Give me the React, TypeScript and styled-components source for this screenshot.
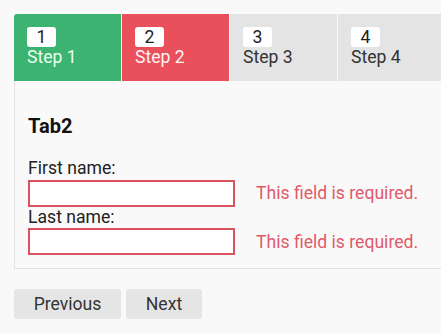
import { ReactElement } from 'react'
import styled, { createGlobalStyle } from 'styled-components'

const GlobalStyle = createGlobalStyle`
  html, body {
    margin: 0;
    padding: 0;
    background: #f9f9f9;
    overflow: hidden;
  }
  body {
    font-family: Roboto, 'Liberation Sans', sans-serif;
    font-size: 17.6px;
    color: #222;
  }
`

const Wizard = styled.div`
  width: 441px;
  box-sizing: border-box;
  padding: 14px 0 14px 14px;
  overflow: hidden;
`

const TabBar = styled.div`
  display: flex;
  gap: 1px;
`

const Tab = styled.div<{ $bg: string; $color: string }>`
  width: 107px;
  height: 67px;
  flex: none;
  box-sizing: border-box;
  padding: 13px 13px 0;
  background: ${(p) => p.$bg};
  color: ${(p) => p.$color};
  line-height: 21px;
  &:first-child {
    border-top-left-radius: 3px;
  }
`

const Badge = styled.span`
  display: block;
  width: 29px;
  height: 20px;
  background: #fff;
  border-radius: 3px;
  color: #222;
  text-align: center;
  line-height: 21px;
`

const Panel = styled.div`
  border-left: 1px solid #e3e3e3;
  border-bottom: 1px solid #e3e3e3;
  padding: 33px 13px 13px;
  height: 188px;
  box-sizing: border-box;
`

const Title = styled.h3`
  margin: 0 0 20px;
  font-size: 20px;
  line-height: 24px;
  font-weight: 700;
  color: #111;
`

const Label = styled.div`
  line-height: 21.5px;
`

const Row = styled.div`
  display: flex;
  align-items: center;
  gap: 21px;
`

const Input = styled.input`
  width: 207px;
  height: 27px;
  box-sizing: border-box;
  border: 2px solid #d9525e;
  background: #fff;
  margin: 0;
  outline: none;
`

const Error = styled.span`
  color: #e0596a;
`

const Buttons = styled.div`
  display: flex;
  gap: 5px;
  margin-top: 20px;
`

const Button = styled.button<{ $w: number }>`
  width: ${(p) => p.$w}px;
  height: 30px;
  border: none;
  border-radius: 3px;
  background: #e5e5e5;
  color: #333;
  font-family: Roboto, 'Liberation Sans', sans-serif;
  font-size: 17.6px;
  padding: 0;
`

const steps = [
  { n: 1, bg: '#3cb371', color: '#e8fff0' },
  { n: 2, bg: '#e9505c', color: '#fff4f4' },
  { n: 3, bg: '#e4e4e4', color: '#333' },
  { n: 4, bg: '#e4e4e4', color: '#333' },
]

export default function App(): ReactElement {
  return (
    <>
      <GlobalStyle />
      <Wizard>
        <TabBar>
          {steps.map((s) => (
            <Tab key={s.n} $bg={s.bg} $color={s.color}>
              <Badge>{s.n}</Badge>
              <div>Step {s.n}</div>
            </Tab>
          ))}
        </TabBar>
        <Panel>
          <Title>Tab2</Title>
          <Label>First name:</Label>
          <Row>
            <Input />
            <Error>This field is required.</Error>
          </Row>
          <Label>Last name:</Label>
          <Row>
            <Input />
            <Error>This field is required.</Error>
          </Row>
        </Panel>
        <Buttons>
          <Button $w={107}>Previous</Button>
          <Button $w={76}>Next</Button>
        </Buttons>
      </Wizard>
    </>
  )
}
